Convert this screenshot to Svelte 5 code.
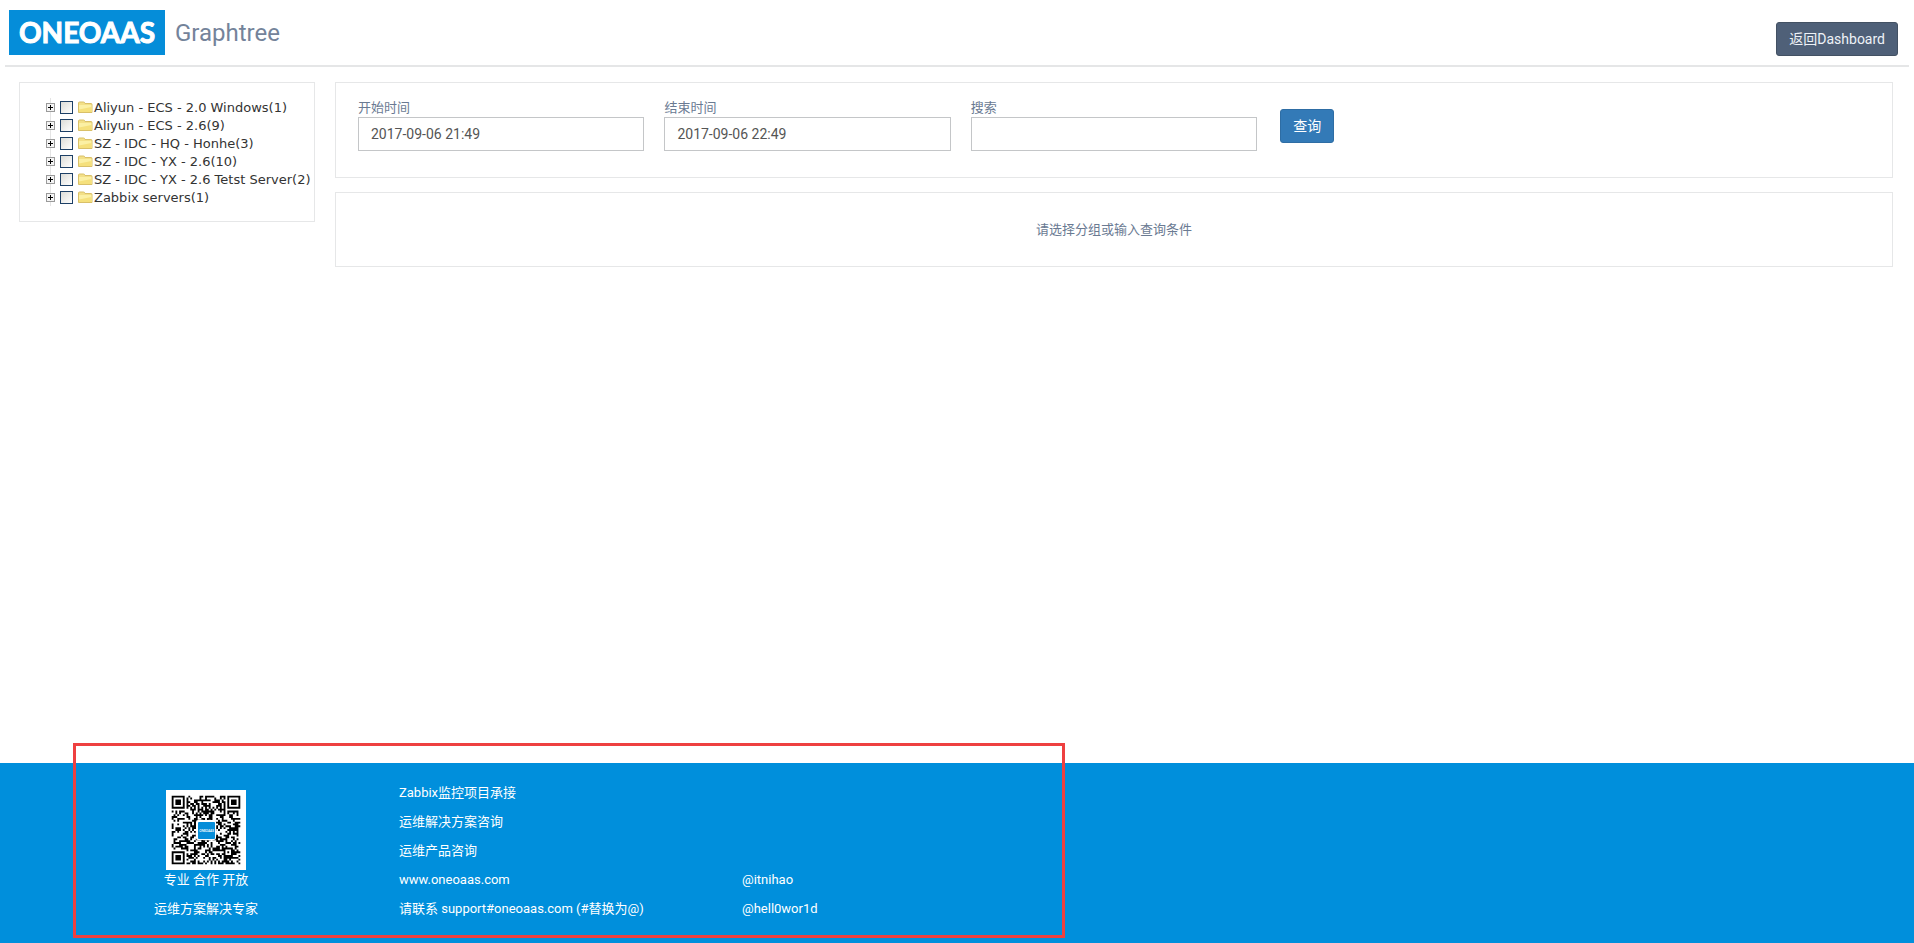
<script lang="ts">
  type Group = { name: string; count: number; checked: boolean; open: boolean }

  let groups = $state<Group[]>([
    { name: 'Aliyun - ECS - 2.0 Windows', count: 1, checked: false, open: false },
    { name: 'Aliyun - ECS - 2.6', count: 9, checked: false, open: false },
    { name: 'SZ - IDC - HQ - Honhe', count: 3, checked: false, open: false },
    { name: 'SZ - IDC - YX - 2.6', count: 10, checked: false, open: false },
    { name: 'SZ - IDC - YX - 2.6 Tetst Server', count: 2, checked: false, open: false },
    { name: 'Zabbix servers', count: 1, checked: false, open: false },
  ])

  let startTime = $state('2017-09-06 21:49')
  let endTime = $state('2017-09-06 22:49')
  let keyword = $state('')

  const QR_SIZE = 37

  // square ring with a solid centre, used for finder and alignment marks
  function mark(x: number, y: number, cx: number, cy: number, r: number) {
    const d = Math.max(Math.abs(x - cx), Math.abs(y - cy))
    if (d > r + 1) return null
    return d === r || d <= r - 2
  }

  function qrPath() {
    let seed = 20170906
    let d = ''
    for (let y = 0; y < QR_SIZE; y++) {
      for (let x = 0; x < QR_SIZE; x++) {
        seed = (seed * 1103515245 + 12345) % 2147483648
        const on =
          mark(x, y, 3, 3, 3) ??
          mark(x, y, 33, 3, 3) ??
          mark(x, y, 3, 33, 3) ??
          (Math.max(Math.abs(x - 30), Math.abs(y - 30)) <= 2 ? mark(x, y, 30, 30, 2) : null) ??
          (x === 6 || y === 6 ? (x + y) % 2 === 0 : seed / 2147483648 < 0.5)
        if (on) d += `M${x} ${y}h1v1h-1z`
      }
    }
    return d
  }
</script>

<div class="page">
  <header class="header">
    <svg class="logo" viewBox="0 0 156 45" role="img" aria-label="ONEOAAS">
      <rect width="156" height="45" fill="#058dd9" />
      <text x="78" y="33" text-anchor="middle">ONEOAAS</text>
    </svg>
    <h1>Graphtree</h1>
    <button class="btn btn-dark" type="button">返回Dashboard</button>
  </header>

  <main class="main">
    <aside class="panel sidebar">
      <ul class="tree">
        {#each groups as g, i}
          <li>
            <button
              class="toggle"
              type="button"
              aria-label="Expand {g.name}"
              aria-expanded={g.open}
              onclick={() => (g.open = !g.open)}
            >
              <svg viewBox="0 0 9 9" shape-rendering="crispEdges">
                <rect x="0.5" y="0.5" width="8" height="8" fill="#f4f4f4" stroke="#9a9a9a" />
                <path d="M2 4h5v1h-5z" />
                {#if !g.open}<path d="M4 2h1v5h-1z" />{/if}
              </svg>
            </button>
            <input id="group-{i}" type="checkbox" bind:checked={g.checked} />
            <label for="group-{i}">
              <svg class="folder" viewBox="0 0 16 14">
                <path d="M0.5 12.500v-9.500q0-1 1-1h4q1 0 1.300 1l.2.5h6q1 0 1 1v8z" fill="#f3e087" stroke="#d9c069" />
                <path d="M1 5h12.500v7h-12.500z" fill="#fbf0a4" />
                <path d="M1 9.500l12.500-2.500v5h-12.500z" fill="#f5e07c" />
              </svg>{g.name}({g.count})</label>
          </li>
        {/each}
      </ul>
    </aside>

    <div class="content">
      <form class="panel search" onsubmit={e => e.preventDefault()}>
        <div class="field">
          <label for="start">开始时间</label>
          <input id="start" type="text" bind:value={startTime} />
        </div>
        <div class="field">
          <label for="end">结束时间</label>
          <input id="end" type="text" bind:value={endTime} />
        </div>
        <div class="field">
          <label for="keyword">搜索</label>
          <input id="keyword" type="text" bind:value={keyword} />
        </div>
        <div class="actions">
          <button class="btn btn-primary" type="submit">查询</button>
        </div>
      </form>

      <div class="panel message">请选择分组或输入查询条件</div>
    </div>
  </main>

  <footer class="footer">
    <div class="col brand">
      <svg class="qr" viewBox="0 0 80 80" role="img" aria-label="QR code">
        <rect width="80" height="80" fill="#fff" />
        <g transform="translate(5.700 5.700) scale(1.854)">
          <path d={qrPath()} />
        </g>
        <rect x="30" y="30" width="20" height="20" rx="2" fill="#fff" />
        <rect x="32" y="32" width="17" height="17" rx="1" fill="#058dd9" />
        <text x="40.500" y="42" text-anchor="middle">ONEOAAS</text>
      </svg>
      <p>专业 合作 开放</p>
      <p>运维方案解决专家</p>
    </div>
    <div class="col">
      <p>Zabbix监控项目承接</p>
      <p>运维解决方案咨询</p>
      <p>运维产品咨询</p>
      <p><a href="http://www.oneoaas.com">www.oneoaas.com</a></p>
      <p>请联系 support#oneoaas.com (#替换为@)</p>
    </div>
    <div class="col">
      <p>@itnihao</p>
      <p>@hell0wor1d</p>
    </div>
    <div class="highlight"></div>
  </footer>
</div>

<style>
  :global(body) {
    margin: 0;
    background: #fff;
  }

  .page {
    display: flex;
    flex-direction: column;
    min-height: 100vh;
    font-family: Roboto, "Noto Sans CJK SC", sans-serif;
    font-size: 13px;
    line-height: 19px;
    color: #6a7a92;
  }
  .page * { box-sizing: border-box; }

  /* header */
  .header {
    display: flex;
    align-items: flex-start;
    margin: 0 5px;
    padding: 10px 11px 8px 4px;
    border-bottom: 2px solid #e5e6e7;
  }
  .logo {
    width: 156px;
    height: 45px;
    margin-right: 10px;
  }
  .logo text {
    font: 700 28px Lato, sans-serif;
    fill: #fff;
    stroke: #fff;
    stroke-width: 1px;
  }
  h1 {
    margin: 0;
    font-size: 24px;
    font-weight: 400;
    line-height: 47px;
    color: #74839a;
  }

  .btn {
    height: 34px;
    padding: 0 12px;
    border: 1px solid;
    border-radius: 3px;
    font: inherit;
    font-size: 14px;
    color: #fff;
    cursor: pointer;
  }
  .btn-dark {
    margin: 12px 0 0 auto;
    background: #4f6078;
    border-color: #435163;
    color: #eef2f7;
  }
  .btn-primary {
    background: #337ab7;
    border-color: #2e6da4;
  }

  /* body */
  .main {
    display: flex;
    align-items: flex-start;
    flex: 1;
    gap: 20px;
    padding: 15px 21px 20px 19px;
  }
  .panel {
    border: 1px solid #e6e7e8;
    background: #fff;
  }
  .sidebar {
    flex: 0 0 296px;
    padding: 15px 0;
  }
  .content {
    display: flex;
    flex: 1;
    flex-direction: column;
    gap: 14px;
    min-width: 0;
  }

  .tree {
    margin: 0;
    padding: 0 0 0 26px;
    list-style: none;
    font-family: Verdana, "DejaVu Sans", sans-serif;
    font-size: 13px;
    color: #333;
  }
  .tree li {
    display: flex;
    align-items: center;
    height: 18px;
    white-space: nowrap;
    background: linear-gradient(#e4e4e4, #e4e4e4) 4px 0 / 1px 100% no-repeat;
  }
  .tree input {
    appearance: none;
    width: 13px;
    height: 13px;
    margin: 0 5px;
    border: 1px solid #1c3f66;
    background: linear-gradient(135deg, #dcdcd7, #fff);
  }
  .tree input:checked { background: #1c5180; }
  .tree label {
    display: flex;
    align-items: center;
  }
  .toggle {
    display: flex;
    padding: 0;
    border: 0;
    background: none;
    cursor: pointer;
  }
  .toggle svg {
    width: 9px;
    height: 9px;
  }
  .folder {
    width: 16px;
    height: 14px;
  }

  .search {
    display: grid;
    grid-template-columns: repeat(5, 1fr);
    column-gap: 20px;
    padding: 15px 22px 26px;
  }
  .field {
    display: flex;
    flex-direction: column;
    min-width: 0;
  }
  .field input {
    width: 100%;
    height: 34px;
    padding: 0 12px;
    border: 1px solid #c4c6c8;
    border-radius: 0;
    font: inherit;
    font-size: 14px;
    color: #555;
  }
  .actions { padding: 11px 3px 0; }

  .message {
    padding: 27px 20px;
    text-align: center;
  }

  /* footer */
  .footer {
    position: relative;
    display: grid;
    grid-template-columns: 386px 343px 1fr;
    align-items: end;
    padding: 20px 13px 25px;
    background: #008fdc;
    color: #fff;
  }
  .col p { margin: 0 0 10px; }
  .col p:last-child { margin-bottom: 0; }
  .col a {
    color: inherit;
    text-decoration: none;
  }
  .brand { text-align: center; }
  .qr {
    display: block;
    width: 80px;
    height: 80px;
    margin: 0 auto;
  }
  .qr text {
    font: 700 3px Lato, sans-serif;
    fill: #fff;
  }
  .highlight {
    position: absolute;
    top: -20px;
    bottom: 5px;
    left: 73px;
    width: 992px;
    border: 3px solid #ee4040;
    pointer-events: none;
  }
</style>
